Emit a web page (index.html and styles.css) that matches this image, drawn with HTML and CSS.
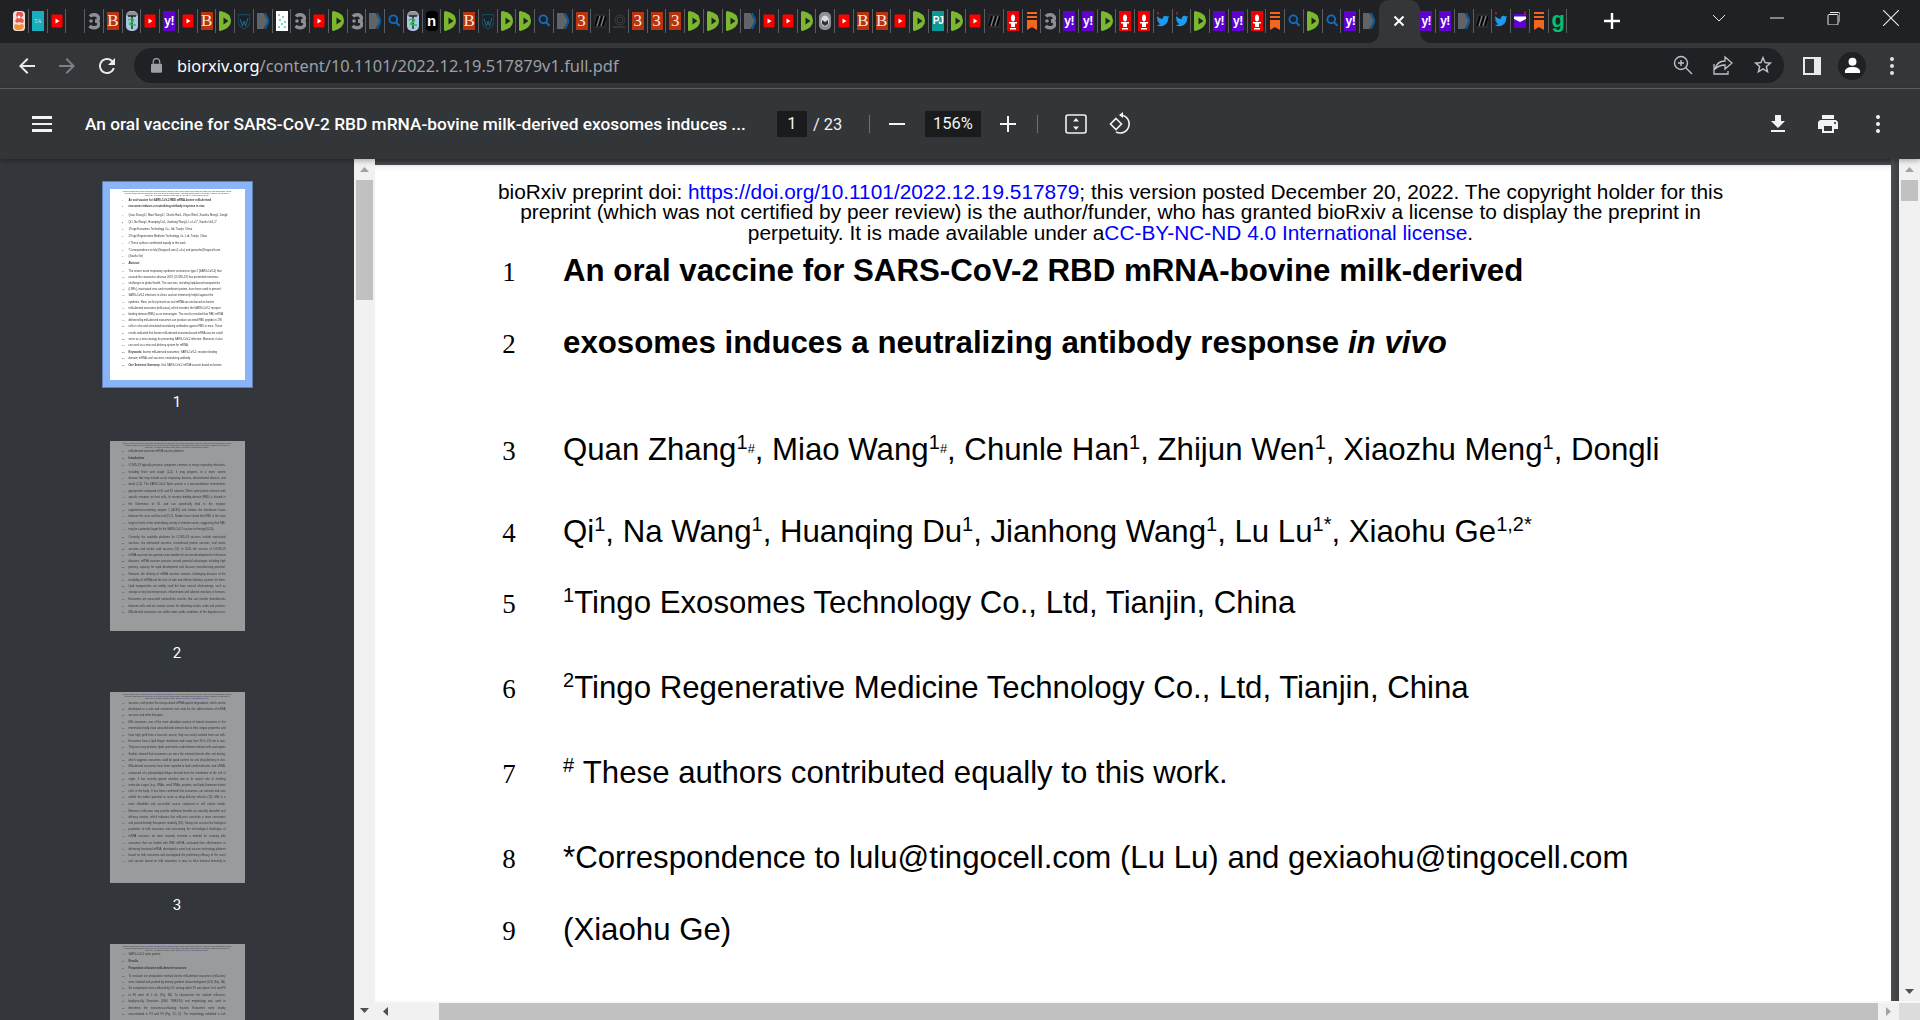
FILE: index.html
```html
<!DOCTYPE html>
<html lang="en">
<head>
<meta charset="utf-8">
<title>An oral vaccine for SARS-CoV-2 RBD mRNA-bovine milk-derived exosomes</title>
<link rel="stylesheet" href="styles.css">
</head>
<body>
<svg class="defs" width="0" height="0" aria-hidden="true">
  <symbol id="fire" viewBox="0 0 12 20"><rect width="12" height="20" rx="3.500" fill="#f6dcd8"/><path d="M4 1h5l1.500 3-2.500 3 3 2-1 3-4-1-2 1-2-2 2-3-1-3z" fill="#e8584a"/><path d="M2 13l4 1 4-1 1 3-3 3H3l-2-3z" fill="#f2922c"/><circle cx="6" cy="6" r="1.600" fill="#fff"/></symbol>
  <symbol id="yt" viewBox="0 0 12 20"><rect x=".5" y="3.5" width="11" height="13" rx="1" fill="#f00"/><path d="M4.500 7.500l4 2.500-4 2.500z" fill="#fff"/></symbol>
  <symbol id="g3" viewBox="0 0 12 20"><path d="M2 5.500C4 3 9 3 10.500 6.500 11 9 9 10 7 10c3 0 4.500 2 3.500 4.500C9 17.500 4 17.500 1.500 15" fill="none" stroke="#8b8e92" stroke-width="3.400"/><circle cx="3" cy="10" r="1.800" fill="#8b8e92"/></symbol>
  <symbol id="staff" viewBox="0 0 12 20"><rect width="12" height="20" rx="5" fill="#a9c7e4"/><path d="M0 5a6 4.500 0 0112 0z" fill="#8d9195"/><path d="M2 5h8M6 5v13" stroke="#222" stroke-width="1.400"/><path d="M2 9c4-2 8 0 4 2s-4 3 4 3" fill="none" stroke="#2fc24a" stroke-width="1.400"/></symbol>
  <symbol id="d" viewBox="0 0 12 20"><path d="M0 1.500Q0 0 1.500 0 12 2 12 10 12 17 1.500 20 0 20 0 18.500z" fill="#7cb82f"/><path d="M4.500 6.500L9.500 10l-5 3.500z" fill="#202124"/></symbol>
  <symbol id="w" viewBox="0 0 12 20"><path d="M0 4q6-1 12 0v7q-1 5-6 7-5-2-6-7z" fill="#15232c" stroke="#1d5a75" stroke-width=".8"/><path d="M2 8l2.500 7L6 10l1.500 5L10 7" fill="none" stroke="#2a6f8f" stroke-width=".9"/></symbol>
  <symbol id="chev" viewBox="0 0 12 20"><path d="M0 2h6.500L11 10l-4.500 8H0z" fill="#606367"/><path d="M8 2l4 8-4 8" fill="none" stroke="#0a5aa0" stroke-width="1.800"/></symbol>
  <symbol id="px" viewBox="0 0 12 20"><rect width="12" height="20" fill="#fff"/><path d="M2 3h2v2H2zM6 5h2v2H6zM3 8h2v2H3zM8 10h2v2H8zM5 12h2v2H5zM2 15h2v2H2zM8 15h2v2H8z" fill="#7fd0c6"/></symbol>
  <symbol id="search" viewBox="0 0 12 20"><circle cx="5.300" cy="8.300" r="3.900" fill="none" stroke="#0f6fc6" stroke-width="1.800"/><path d="M8 11.300l3.500 3.500" stroke="#0f6fc6" stroke-width="2"/></symbol>
  <symbol id="oa" viewBox="0 0 12 20"><rect y="3" width="12" height="14" fill="#2b2c2f"/><path d="M1 15l3-10M5 15l3-10M9 15l3-10" stroke="#000" stroke-width="1.600"/><path d="M3 15l3-10M7 15l3-10" stroke="#a8a8a8" stroke-width=".8"/></symbol>
  <symbol id="spiral" viewBox="0 0 12 20"><g fill="none" stroke="#3c3d40"><circle cx="7" cy="9" r="5"/><circle cx="7" cy="9" r="3"/><path d="M0 16h12" stroke-width="1.500"/></g></symbol>
  <symbol id="owl" viewBox="0 0 12 20"><rect y="1" width="12" height="18" rx="5" fill="#8d9195"/><ellipse cx="6" cy="10" rx="4" ry="5.500" fill="#d8dadc"/><path d="M3 9l3 2 3-2v4l-3 2-3-2z" fill="#333"/></symbol>
  <symbol id="torch" viewBox="0 0 12 20"><rect width="12" height="20" fill="#ee0000"/><ellipse cx="6" cy="7" rx="2" ry="3.500" fill="#fff"/><path d="M2 11h8v1.500H8V16H4v-3.500H2zM3 17h6v1.500H3z" fill="#fff"/></symbol>
  <symbol id="bookmark" viewBox="0 0 12 20"><path d="M1 1h10v2H1zM1 5h10v2H1zM1 9h10v10l-5-3-5 3z" fill="#f4661e"/></symbol>
  <symbol id="tw" viewBox="0 0 12 20"><g transform="translate(-.500 3.500) scale(.54)"><path d="M23.953 4.570a10 10 0 01-2.825.775 4.958 4.958 0 002.163-2.723c-.951.555-2.005.959-3.127 1.184a4.920 4.920 0 00-8.384 4.482C7.690 8.095 4.067 6.130 1.640 3.162a4.822 4.822 0 00-.666 2.475c0 1.710.870 3.213 2.188 4.096a4.904 4.904 0 01-2.228-.616v.060a4.923 4.923 0 003.946 4.827 4.996 4.996 0 01-2.212.085 4.936 4.936 0 004.604 3.417 9.867 9.867 0 01-6.102 2.105c-.390 0-.779-.023-1.170-.067a13.995 13.995 0 007.557 2.209c9.053 0 13.998-7.496 13.998-13.985 0-.210 0-.420-.015-.630A9.935 9.935 0 0024 4.590z" fill="#1d9bf0"/></g><rect x=".5" y="1" width="1" height="2.500" fill="#e0245e"/></symbol>
  <symbol id="mail" viewBox="0 0 12 20"><rect y="3" width="12" height="14" fill="#6001d2"/><path d="M0 5.500h12v2.500l-6 3-6-3z" fill="#fff"/><rect x="10.500" y="0" width="1" height="4" fill="#e0245e"/></symbol>
</svg>

<header class="tabstrip">
  <div class="tabs">
    <div class="tab"><svg class="fav"><use href="#fire"/></svg></div>
    <div class="tab"><div class="fav-t t-ta">TA</div></div>
    <div class="tab"><svg class="fav"><use href="#yt"/></svg></div>
    <div class="tab"></div>
    <div class="tab"><svg class="fav"><use href="#g3"/></svg></div>
    <div class="tab"><div class="fav-t t-b">B</div></div>
    <div class="tab"><svg class="fav"><use href="#staff"/></svg></div>
    <div class="tab"><svg class="fav"><use href="#yt"/></svg></div>
    <div class="tab"><div class="fav-t t-y">y!</div></div>
    <div class="tab"><svg class="fav"><use href="#yt"/></svg></div>
    <div class="tab"><div class="fav-t t-b">B</div></div>
    <div class="tab"><svg class="fav"><use href="#d"/></svg></div>
    <div class="tab"><svg class="fav"><use href="#w"/></svg></div>
    <div class="tab"><svg class="fav"><use href="#chev"/></svg></div>
    <div class="tab"><svg class="fav"><use href="#px"/></svg></div>
    <div class="tab"><svg class="fav"><use href="#g3"/></svg></div>
    <div class="tab"><svg class="fav"><use href="#yt"/></svg></div>
    <div class="tab"><svg class="fav"><use href="#d"/></svg></div>
    <div class="tab"><svg class="fav"><use href="#g3"/></svg></div>
    <div class="tab"><svg class="fav"><use href="#chev"/></svg></div>
    <div class="tab"><svg class="fav"><use href="#search"/></svg></div>
    <div class="tab"><svg class="fav"><use href="#staff"/></svg></div>
    <div class="tab"><div class="fav-t t-n">n</div></div>
    <div class="tab"><svg class="fav"><use href="#d"/></svg></div>
    <div class="tab"><div class="fav-t t-b">B</div></div>
    <div class="tab"><svg class="fav"><use href="#w"/></svg></div>
    <div class="tab"><svg class="fav"><use href="#d"/></svg></div>
    <div class="tab"><svg class="fav"><use href="#d"/></svg></div>
    <div class="tab"><svg class="fav"><use href="#search"/></svg></div>
    <div class="tab"><svg class="fav"><use href="#chev"/></svg></div>
    <div class="tab"><div class="fav-t t-b">3</div></div>
    <div class="tab"><svg class="fav"><use href="#oa"/></svg></div>
    <div class="tab"><svg class="fav"><use href="#spiral"/></svg></div>
    <div class="tab"><div class="fav-t t-b">3</div></div>
    <div class="tab"><div class="fav-t t-b">3</div></div>
    <div class="tab"><div class="fav-t t-b">3</div></div>
    <div class="tab"><svg class="fav"><use href="#d"/></svg></div>
    <div class="tab"><svg class="fav"><use href="#d"/></svg></div>
    <div class="tab"><svg class="fav"><use href="#d"/></svg></div>
    <div class="tab"><svg class="fav"><use href="#chev"/></svg></div>
    <div class="tab"><svg class="fav"><use href="#yt"/></svg></div>
    <div class="tab"><svg class="fav"><use href="#yt"/></svg></div>
    <div class="tab"><svg class="fav"><use href="#d"/></svg></div>
    <div class="tab"><svg class="fav"><use href="#owl"/></svg></div>
    <div class="tab"><svg class="fav"><use href="#yt"/></svg></div>
    <div class="tab"><div class="fav-t t-b">B</div></div>
    <div class="tab"><div class="fav-t t-b">B</div></div>
    <div class="tab"><svg class="fav"><use href="#yt"/></svg></div>
    <div class="tab"><svg class="fav"><use href="#d"/></svg></div>
    <div class="tab"><div class="fav-t t-pj">PJ</div></div>
    <div class="tab"><svg class="fav"><use href="#d"/></svg></div>
    <div class="tab"><svg class="fav"><use href="#yt"/></svg></div>
    <div class="tab"><svg class="fav"><use href="#oa"/></svg></div>
    <div class="tab"><svg class="fav"><use href="#torch"/></svg></div>
    <div class="tab"><svg class="fav"><use href="#bookmark"/></svg></div>
    <div class="tab"><svg class="fav"><use href="#g3"/></svg></div>
    <div class="tab"><div class="fav-t t-y">y!</div></div>
    <div class="tab"><div class="fav-t t-y">y!</div></div>
    <div class="tab"><svg class="fav"><use href="#d"/></svg></div>
    <div class="tab"><svg class="fav"><use href="#torch"/></svg></div>
    <div class="tab"><svg class="fav"><use href="#torch"/></svg></div>
    <div class="tab"><svg class="fav"><use href="#tw"/></svg></div>
    <div class="tab"><svg class="fav"><use href="#tw"/></svg></div>
    <div class="tab"><svg class="fav"><use href="#d"/></svg></div>
    <div class="tab"><div class="fav-t t-y">y!</div></div>
    <div class="tab"><div class="fav-t t-y">y!</div></div>
    <div class="tab"><svg class="fav"><use href="#torch"/></svg></div>
    <div class="tab"><svg class="fav"><use href="#bookmark"/></svg></div>
    <div class="tab"><svg class="fav"><use href="#search"/></svg></div>
    <div class="tab"><svg class="fav"><use href="#d"/></svg></div>
    <div class="tab"><svg class="fav"><use href="#search"/></svg></div>
    <div class="tab"><div class="fav-t t-y">y!</div></div>
    <div class="tab tab-last"><svg class="fav"><use href="#chev"/></svg></div>
    <div class="tab-active"><svg class="icon-close-tab" viewBox="0 0 12 12"><path d="M1.500 1.500l9 9M10.500 1.500l-9 9"/></svg></div>
    <div class="tab"><div class="fav-t t-y">y!</div></div>
    <div class="tab"><div class="fav-t t-y">y!</div></div>
    <div class="tab"><svg class="fav"><use href="#chev"/></svg></div>
    <div class="tab"><svg class="fav"><use href="#oa"/></svg></div>
    <div class="tab"><svg class="fav"><use href="#tw"/></svg></div>
    <div class="tab"><svg class="fav"><use href="#mail"/></svg></div>
    <div class="tab"><svg class="fav"><use href="#bookmark"/></svg></div>
    <div class="tab"><div class="fav-t t-g">g</div></div>
  </div>
  <svg class="new-tab" viewBox="0 0 16 16"><path d="M8 0v16M0 8h16"/></svg>
  <div class="spacer"></div>
  <div class="win-controls">
    <div class="win-btn"><svg class="win-icon" viewBox="0 0 14 14"><path d="M1 4l6 6 6-6"/></svg></div>
    <div class="win-btn win-min"><svg class="win-icon" viewBox="0 0 14 14"><path d="M0 7h14"/></svg></div>
    <div class="win-btn"><svg class="win-icon" viewBox="0 0 14 14"><path d="M3 3.500h8a1 1 0 011 1V13a1 1 0 01-1 1H3a1 1 0 01-1-1V4.500a1 1 0 011-1zM4 1.500h8.500a1.500 1.500 0 011.500 1.500v8"/></svg></div>
    <div class="win-btn"><svg class="win-icon win-x" viewBox="0 0 14 14"><path d="M0 0l14 14M14 0L0 14"/></svg></div>
  </div>
</header>

<nav class="toolbar">
  <div class="nav-btn"><svg class="icon-24 on-light" viewBox="0 0 24 24"><path d="M20 11H7.800l5.600-5.600L12 4l-8 8 8 8 1.400-1.400L7.800 13H20z"/></svg></div>
  <div class="nav-btn"><svg class="icon-24 on-dim" viewBox="0 0 24 24"><path d="M4 11h12.200l-5.600-5.600L12 4l8 8-8 8-1.400-1.400 5.600-5.600H4z"/></svg></div>
  <div class="nav-btn"><svg class="icon-24 on-light" viewBox="0 0 24 24"><path d="M17.650 6.350A7.958 7.958 0 0012 4c-4.420 0-7.990 3.580-7.990 8s3.570 8 7.990 8c3.730 0 6.840-2.550 7.730-6h-2.080A5.990 5.990 0 0112 18c-3.310 0-6-2.690-6-6s2.690-6 6-6c1.660 0 3.140.690 4.220 1.780L13 11h7V4l-2.350 2.350z"/></svg></div>
  <div class="omnibox">
    <svg class="lock" viewBox="0 0 12 16"><path d="M2.500 6V4a3.500 3.500 0 017 0v2" fill="none" stroke="#9aa0a6" stroke-width="1.400"/><rect y="6" width="12" height="10" rx="1.500" fill="#9aa0a6"/></svg>
    <div class="url"><span class="domain">biorxiv.org</span>/content/10.1101/2022.12.19.517879v1.full.pdf</div>
    <div class="omni-icons">
      <svg class="omni-icon omni-zoom" viewBox="0 0 20 20"><g fill="none" stroke="#bdc1c6" stroke-width="1.400"><circle cx="8" cy="8" r="6.500"/><path d="M12.800 12.800L19 19M5 8h6M8 5v6"/></g></svg>
      <svg class="omni-icon omni-share" viewBox="0 0 20 20"><g fill="none" stroke="#bdc1c6" stroke-width="1.300"><path d="M1 9v10h14v-3M2 14q2-8 10-8V2l7 6-7 6v-4q-6 0-10 4z"/></g></svg>
      <svg class="omni-icon-star" viewBox="0 0 24 24"><path fill="#bdc1c6" d="M22 9.240l-7.190-.620L12 2 9.190 8.630 2 9.240l5.460 4.730L5.820 21 12 17.270 18.180 21l-1.630-7.030L22 9.240zM12 15.400l-3.760 2.270 1-4.280-3.320-2.880 4.380-.380L12 6.100l1.710 4.040 4.380.380-3.320 2.880 1 4.280L12 15.400z"/></svg>
    </div>
  </div>
  <div class="nav-btn nav-panel"><svg class="panel-icon" viewBox="0 0 18 18"><path fill="#e8eaed" d="M0 0h18v18H0z"/><path fill="#35363a" d="M2 2h9v14H2z"/></svg></div>
  <div class="nav-btn"><div class="avatar"><svg class="avatar-icon" viewBox="0 0 18 18"><circle cx="9" cy="5" r="4.200" fill="#fff"/><path d="M1 17v-2c0-3 4-4.500 8-4.500s8 1.500 8 4.500v2z" fill="#fff"/></svg></div></div>
  <div class="nav-btn"><svg class="dots" viewBox="0 0 4 20"><circle cx="2" cy="3" r="2"/><circle cx="2" cy="10" r="2"/><circle cx="2" cy="17" r="2"/></svg></div>
</nav>

<div class="pdf-toolbar">
  <div class="menu-icon"><span></span><span></span><span></span></div>
  <div class="doc-title">An oral vaccine for SARS-CoV-2 RBD mRNA-bovine milk-derived exosomes induces ...</div>
  <div class="page-input">1</div>
  <div class="page-count">/ 23</div>
  <div class="tb-sep sep-a"></div>
  <svg class="zoom-sign sign-minus" viewBox="0 0 16 16"><path d="M0 8h16"/></svg>
  <div class="zoom-input">156%</div>
  <svg class="zoom-sign sign-plus" viewBox="0 0 16 16"><path d="M0 8h16M8 0v16"/></svg>
  <div class="tb-sep sep-b"></div>
  <svg class="fit-icon" viewBox="0 0 22 20"><rect x="1" y="1" width="20" height="18" rx="2" fill="none" stroke="#f1f3f4" stroke-width="1.600"/><path d="M11 4l3 3.500H8zM11 16l-3-3.500h6z" fill="#f1f3f4"/></svg>
  <svg class="rotate-icon" viewBox="0 0 24 24"><g fill="none" stroke="#f1f3f4" stroke-width="1.600"><path d="M8 6.500l5.500 5.500L8 17.500 2.500 12z"/><path d="M12 3a9 9 0 11-4 17"/></g><path d="M15 0v6l-4-3z" fill="#f1f3f4"/></svg>
  <div class="spacer"></div>
  <svg class="icon-24 tb-right on-bright" viewBox="0 0 24 24"><path d="M19 9h-4V3H9v6H5l7 7 7-7zM5 18v2h14v-2H5z"/></svg>
  <svg class="icon-24 tb-right on-bright" viewBox="0 0 24 24"><path d="M19 8H5c-1.660 0-3 1.340-3 3v6h4v4h12v-4h4v-6c0-1.660-1.340-3-3-3zm-3 11H8v-5h8v5zm3-7c-.550 0-1-.450-1-1s.450-1 1-1 1 .450 1 1-.450 1-1 1zm-1-9H6v4h12V3z"/></svg>
  <svg class="icon-24 tb-right on-bright" viewBox="0 0 24 24"><circle cx="12" cy="5" r="2"/><circle cx="12" cy="12" r="2"/><circle cx="12" cy="19" r="2"/></svg>
</div>

<main class="workspace">
  <aside class="sidebar">
    <div class="thumbs">
      <div class="thumb-item">
        <div class="thumb-frame selected">
          <div class="thumb">
            <div class="t-head">bioRxiv preprint doi: <span class="t-link">https://doi.org/10.1101/2022.12.19.517879</span>; this version posted December 20, 2022. The copyright holder for this<br>preprint (which was not certified by peer review) is the author/funder, who has granted bioRxiv a license to display the preprint in<br>perpetuity. It is made available under a<span class="t-link">CC-BY-NC-ND 4.0 International license.</span></div>
            <div class="tl tl-strong"><span class="tn">1</span><span class="tx">An oral vaccine for SARS-CoV-2 RBD mRNA-bovine milk-derived</span></div>
            <div class="tl tl-strong"><span class="tn">2</span><span class="tx">exosomes induces a neutralizing antibody response in vivo</span></div>
            <div class="tl tl-big"><span class="tn">3</span><span class="tx">Quan Zhang1#, Miao Wang1#, Chunle Han1, Zhijun Wen1, Xiaozhu Meng1, Dongli</span></div>
            <div class="tl tl-mid"><span class="tn">4</span><span class="tx">Qi1, Na Wang1, Huanqing Du1, Jianhong Wang1, Lu Lu1*, Xiaohu Ge1,2*</span></div>
            <div class="tl"><span class="tn">5</span><span class="tx">1Tingo Exosomes Technology Co., Ltd, Tianjin, China</span></div>
            <div class="tl tl-mid"><span class="tn">6</span><span class="tx">2Tingo Regenerative Medicine Technology Co., Ltd, Tianjin, China</span></div>
            <div class="tl tl-mid"><span class="tn">7</span><span class="tx"># These authors contributed equally to this work.</span></div>
            <div class="tl tl-mid"><span class="tn">8</span><span class="tx">*Correspondence to lulu@tingocell.com (Lu Lu) and gexiaohu@tingocell.com</span></div>
            <div class="tl"><span class="tn">9</span><span class="tx">(Xiaohu Ge)</span></div>
            <div class="tl tl-mid tl-strong"><span class="tn">10</span><span class="tx">Abstract</span></div>
            <div class="tl tl-mid"><span class="tn">11</span><span class="tx">The severe acute respiratory syndrome coronavirus type 2 (SARS-CoV-2) that</span></div>
            <div class="tl"><span class="tn">12</span><span class="tx">caused the coronavirus disease 2019 (COVID-19) has presented numerous</span></div>
            <div class="tl"><span class="tn">13</span><span class="tx">challenges to global health. The vaccines, including lipid-based nanoparticles</span></div>
            <div class="tl"><span class="tn">14</span><span class="tx">(LNPs), inactivated virus and recombinant protein, have been used to prevent</span></div>
            <div class="tl"><span class="tn">15</span><span class="tx">SARS-CoV-2 infections in clinics and are immensely helpful against the</span></div>
            <div class="tl"><span class="tn">16</span><span class="tx">epidemic. Here, we first present an oral mRNA vaccine based on bovine</span></div>
            <div class="tl"><span class="tn">17</span><span class="tx">milk-derived exosomes (milk-exos), which encodes the SARS-CoV-2 receptor</span></div>
            <div class="tl"><span class="tn">18</span><span class="tx">binding domain (RBD) as an immunogen. The results revealed that RBD mRNA</span></div>
            <div class="tl"><span class="tn">19</span><span class="tx">delivered by milk-derived exosomes can produce secreted RBD peptide in 293</span></div>
            <div class="tl"><span class="tn">20</span><span class="tx">cells in vitro and stimulated neutralizing antibodies against RBD in mice. These</span></div>
            <div class="tl"><span class="tn">21</span><span class="tx">results indicated that bovine milk-derived exosome-based mRNA vaccine could</span></div>
            <div class="tl"><span class="tn">22</span><span class="tx">serve as a new strategy for preventing SARS-CoV-2 infection. Moreover, it also</span></div>
            <div class="tl"><span class="tn">23</span><span class="tx">can work as a new oral delivery system for mRNA.</span></div>
            <div class="tl tl-mid"><span class="tn">24</span><span class="tx"><b>Keywords:</b> bovine milk-derived exosomes; SARS-CoV-2; receptor binding</span></div>
            <div class="tl"><span class="tn">25</span><span class="tx">domain; mRNA; oral vaccines; neutralizing antibody</span></div>
            <div class="tl tl-mid"><span class="tn">26</span><span class="tx"><b>One Sentence Summary:</b> Oral SARS-CoV-2 mRNA vaccine based on bovine</span></div>
          </div>
        </div>
        <div class="thumb-label">1</div>
      </div>

      <div class="thumb-item">
        <div class="thumb-frame">
          <div class="thumb dim">
            <div class="t-head">bioRxiv preprint doi: <span class="t-link">https://doi.org/10.1101/2022.12.19.517879</span>; this version posted December 20, 2022. The copyright holder for this<br>preprint (which was not certified by peer review) is the author/funder, who has granted bioRxiv a license to display the preprint in<br>perpetuity. It is made available under a<span class="t-link">CC-BY-NC-ND 4.0 International license.</span></div>
            <div class="tl"><span class="tn">27</span><span class="tx">milk-derived exosome mRNA vaccine platform.</span></div>
            <div class="tl tl-mid tl-strong"><span class="tn">28</span><span class="tx">Introduction</span></div>
            <div class="tl tl-mid tj"><span class="tn">29</span><span class="tx">COVID-19 typically presents symptoms common to many respiratory infections,</span></div>
            <div class="tl tj"><span class="tn">30</span><span class="tx">including fever and cough (1-4). It may progress to a more severe</span></div>
            <div class="tl tj"><span class="tn">31</span><span class="tx">disease that may include acute respiratory distress, disseminated disease, and</span></div>
            <div class="tl tj"><span class="tn">32</span><span class="tx">death (1-3). The SARS-CoV-2 Spike protein is a transmembrane homotrimeric</span></div>
            <div class="tl tl-mid tj"><span class="tn">33</span><span class="tx">glycoprotein composed of S1 and S2 subunits. When spike protein interacts with</span></div>
            <div class="tl tj"><span class="tn">34</span><span class="tx">specific receptors on host cells, its receptor binding domain (RBD) is located in</span></div>
            <div class="tl tj"><span class="tn">35</span><span class="tx">the N-terminus of S1 and can specifically bind to the receptor</span></div>
            <div class="tl tj"><span class="tn">36</span><span class="tx">angiotensin-converting enzyme 2 (ACE2) and initiates the membrane fusion</span></div>
            <div class="tl tj"><span class="tn">37</span><span class="tx">between the virus and host cell (5-7). Studies have shown that RBD is the main</span></div>
            <div class="tl tl-mid tj"><span class="tn">38</span><span class="tx">target of most of the neutralizing activity in immune serum, suggesting that RBD</span></div>
            <div class="tl"><span class="tn">39</span><span class="tx">may be a potential target for the SARS-CoV-2 vaccine or therapy (8-10).</span></div>
            <div class="tl tl-mid tj"><span class="tn">40</span><span class="tx">Currently, the available platforms for COVID-19 vaccines include inactivated</span></div>
            <div class="tl tj"><span class="tn">41</span><span class="tx">vaccines, live attenuated vaccines, recombinant protein vaccines, viral vector</span></div>
            <div class="tl tj"><span class="tn">42</span><span class="tx">vaccines and nucleic acid vaccines (11). In 2020, the success of COVID-19</span></div>
            <div class="tl tj"><span class="tn">43</span><span class="tx">mRNA vaccines has opened a new window for vaccine development for infectious</span></div>
            <div class="tl tj"><span class="tn">44</span><span class="tx">diseases. mRNA vaccines possess several potential advantages including high</span></div>
            <div class="tl tj"><span class="tn">45</span><span class="tx">potency, capacity for rapid development and low-cost manufacturing potential.</span></div>
            <div class="tl tj"><span class="tn">46</span><span class="tx">However, the delivery of mRNA vaccines remains challenging because of the</span></div>
            <div class="tl tj"><span class="tn">47</span><span class="tx">instability of mRNA and the lack of safe and efficient delivery systems for them.</span></div>
            <div class="tl tj"><span class="tn">48</span><span class="tx">Lipid nanoparticles are widely used but have several shortcomings, such as</span></div>
            <div class="tl tj"><span class="tn">49</span><span class="tx">storage at very low temperature, inflammation and adverse reactions in humans.</span></div>
            <div class="tl tl-mid tj"><span class="tn">50</span><span class="tx">Exosomes are nanosized extracellular vesicles that can transfer biomolecules</span></div>
            <div class="tl tj"><span class="tn">51</span><span class="tx">between cells and are natural carriers for delivering nucleic acids and proteins.</span></div>
            <div class="tl tj"><span class="tn">52</span><span class="tx">Milk-derived exosomes are stable under acidic conditions of the digestive tract.</span></div>
          </div>
        </div>
        <div class="thumb-label">2</div>
      </div>

      <div class="thumb-item">
        <div class="thumb-frame">
          <div class="thumb dim">
            <div class="t-head">bioRxiv preprint doi: <span class="t-link">https://doi.org/10.1101/2022.12.19.517879</span>; this version posted December 20, 2022. The copyright holder for this<br>preprint (which was not certified by peer review) is the author/funder, who has granted bioRxiv a license to display the preprint in<br>perpetuity. It is made available under a<span class="t-link">CC-BY-NC-ND 4.0 International license.</span></div>
            <div class="tl tj"><span class="tn">53</span><span class="tx">vaccines, and protect the encapsulated mRNA against degradation, which can be</span></div>
            <div class="tl tj"><span class="tn">54</span><span class="tx">developed as a safe and convenient oral route for the administration of mRNA</span></div>
            <div class="tl"><span class="tn">55</span><span class="tx">vaccines and other therapies.</span></div>
            <div class="tl tl-mid tj"><span class="tn">56</span><span class="tx">Milk exosomes, one of the most abundant sources of natural exosomes in the</span></div>
            <div class="tl tj"><span class="tn">57</span><span class="tx">mammalian body, have attracted wide interest due to their unique properties and</span></div>
            <div class="tl tj"><span class="tn">58</span><span class="tx">have high yield from a low-cost source; they are easily isolated from raw milk.</span></div>
            <div class="tl tj"><span class="tn">59</span><span class="tx">Exosomes have a lipid bilayer membrane and range from 30 to 150 nm in size.</span></div>
            <div class="tl tj"><span class="tn">60</span><span class="tx">They can carry proteins, lipids and nucleic acids between distant cells and organs</span></div>
            <div class="tl tl-mid tj"><span class="tn">61</span><span class="tx">Studies showed that exosomes can cross the intestinal barrier after oral dosing,</span></div>
            <div class="tl tj"><span class="tn">62</span><span class="tx">which suggests exosomes could be good carriers for oral drug delivery in vivo.</span></div>
            <div class="tl tj"><span class="tn">63</span><span class="tx">Milk-derived exosomes have been reported to load small molecules and siRNA.</span></div>
            <div class="tl tj"><span class="tn">64</span><span class="tx">composed of a phospholipid bilayer derived from the membrane of the cell of</span></div>
            <div class="tl tj"><span class="tn">65</span><span class="tx">origin. It has recently gained attention due to its natural role of shuttling</span></div>
            <div class="tl tj"><span class="tn">66</span><span class="tx">molecular cargos (e.g., RNAs, small RNAs, proteins, and lipids) between distant</span></div>
            <div class="tl tj"><span class="tn">67</span><span class="tx">cells in the body. It has been confirmed that exosomes can transmit and also</span></div>
            <div class="tl tj"><span class="tn">68</span><span class="tx">exhibit the widest potential to serve as drug delivery vehicles (16). Milk is a</span></div>
            <div class="tl tj"><span class="tn">69</span><span class="tx">more affordable and accessible source compared to cell culture media.</span></div>
            <div class="tl tl-mid tj"><span class="tn">70</span><span class="tx">Moreover, milk-exos may provide additional benefits as naturally desirable oral</span></div>
            <div class="tl tj"><span class="tn">71</span><span class="tx">delivery carriers, which indicates that milk-exos constitute a more convenient</span></div>
            <div class="tl tj"><span class="tn">72</span><span class="tx">and patient-friendly therapeutic modality (26). Taking into account the biological</span></div>
            <div class="tl tj"><span class="tn">73</span><span class="tx">properties of milk exosomes and overcoming the technological challenges of</span></div>
            <div class="tl tj"><span class="tn">74</span><span class="tx">mRNA vaccines, we have instantly invented a method for creating milk</span></div>
            <div class="tl tl-mid tj"><span class="tn">75</span><span class="tx">exosomes that are loaded with RBD mRNA, evaluated their effectiveness in</span></div>
            <div class="tl tj"><span class="tn">76</span><span class="tx">delivering functional mRNA, developed a novel oral vaccine technology platform</span></div>
            <div class="tl tj"><span class="tn">77</span><span class="tx">based on milk exosomes and investigated the preliminary efficacy of the novel</span></div>
            <div class="tl tj"><span class="tn">78</span><span class="tx">oral vaccine based on milk exosomes in mice to elicit humoral immunity to</span></div>
          </div>
        </div>
        <div class="thumb-label">3</div>
      </div>

      <div class="thumb-item">
        <div class="thumb-frame">
          <div class="thumb dim">
            <div class="t-head">bioRxiv preprint doi: <span class="t-link">https://doi.org/10.1101/2022.12.19.517879</span>; this version posted December 20, 2022. The copyright holder for this<br>preprint (which was not certified by peer review) is the author/funder, who has granted bioRxiv a license to display the preprint in<br>perpetuity. It is made available under a<span class="t-link">CC-BY-NC-ND 4.0 International license.</span></div>
            <div class="tl"><span class="tn">79</span><span class="tx">SARS-CoV-2 spike protein.</span></div>
            <div class="tl tl-mid tl-strong"><span class="tn">80</span><span class="tx">Results</span></div>
            <div class="tl tl-mid tl-strong"><span class="tn">81</span><span class="tx">Preparation of bovine milk-derived exosomes</span></div>
            <div class="tl tl-mid tj"><span class="tn">82</span><span class="tx">To evaluate our preparation method, bovine milk-derived exosomes (milk-exos)</span></div>
            <div class="tl tj"><span class="tn">83</span><span class="tx">were isolated and purified by density gradient ultracentrifugation (DG) (Fig. 1A).</span></div>
            <div class="tl tj"><span class="tn">84</span><span class="tx">Six components were collected by DG, among which F1 was about 5 mL and F6</span></div>
            <div class="tl tl-mid tj"><span class="tn">85</span><span class="tx">to F6 were all 2 mL (Fig. 1B). To characterize the isolated milk-exos,</span></div>
            <div class="tl tj"><span class="tn">86</span><span class="tx">biophysically, Nanosizer (DSN, TEM-F10) and morphology was used to</span></div>
            <div class="tl tj"><span class="tn">87</span><span class="tx">determine the exosomes-containing fraction. Exosomes were mainly</span></div>
            <div class="tl tj"><span class="tn">88</span><span class="tx">concentrated in F3 and F4 (Fig. 1C, D). The morphology exhibited a rich</span></div>
          </div>
        </div>
        <div class="thumb-label">4</div>
      </div>
    </div>
    <div class="sb-v sb-left">
      <svg class="arrow" viewBox="0 0 9 5"><path d="M4.500 0L9 5H0z" fill="#a3a3a3"/></svg>
      <div class="sb-thumb left-thumb"></div>
      <div class="spacer"></div>
      <svg class="arrow" viewBox="0 0 9 5"><path d="M0 0h9L4.500 5z" fill="#505050"/></svg>
    </div>
  </aside>

  <section class="viewer">
    <div class="viewer-main">
      <div class="page-col">
        <div class="top-gutter"></div>
        <article class="page">
          <div class="pre-note">
            <div>bioRxiv preprint doi: <a class="blue">https://doi.org/10.1101/2022.12.19.517879</a>; this version posted December 20, 2022. The copyright holder for this</div>
            <div>preprint (which was not certified by peer review) is the author/funder, who has granted bioRxiv a license to display the preprint in</div>
            <div>perpetuity. It is made available under a<a class="blue">CC-BY-NC-ND 4.0 International license</a>.</div>
          </div>
          <div class="row row-title1"><span class="num">1</span><h1 class="title">An oral vaccine for SARS-CoV-2 RBD mRNA-bovine milk-derived</h1></div>
          <div class="row row-title2"><span class="num">2</span><h1 class="title">exosomes induces a neutralizing antibody response <i>in vivo</i></h1></div>
          <div class="row row-a3"><span class="num">3</span><p class="line">Quan Zhang<sup>1</sup><sup class="hash">#</sup>, Miao Wang<sup>1</sup><sup class="hash">#</sup>, Chunle Han<sup>1</sup>, Zhijun Wen<sup>1</sup>, Xiaozhu Meng<sup>1</sup>, Dongli</p></div>
          <div class="row row-a4"><span class="num">4</span><p class="line">Qi<sup>1</sup>, Na Wang<sup>1</sup>, Huanqing Du<sup>1</sup>, Jianhong Wang<sup>1</sup>, Lu Lu<sup>1*</sup>, Xiaohu Ge<sup>1,2*</sup></p></div>
          <div class="row row-a5"><span class="num">5</span><p class="line"><sup>1</sup>Tingo Exosomes Technology Co., Ltd, Tianjin, China</p></div>
          <div class="row row-a6"><span class="num">6</span><p class="line"><sup>2</sup>Tingo Regenerative Medicine Technology Co., Ltd, Tianjin, China</p></div>
          <div class="row row-a7"><span class="num">7</span><p class="line"><sup class="sup-gap">#</sup> These authors contributed equally to this work.</p></div>
          <div class="row row-a8"><span class="num">8</span><p class="line">*Correspondence to lulu@tingocell.com (Lu Lu) and gexiaohu@tingocell.com</p></div>
          <div class="row row-a9"><span class="num">9</span><p class="line">(Xiaohu Ge)</p></div>
        </article>
      </div>
      <div class="side-gutter"></div>
      <div class="sb-v sb-right">
        <svg class="arrow" viewBox="0 0 9 5"><path d="M4.500 0L9 5H0z" fill="#a3a3a3"/></svg>
        <div class="sb-thumb right-thumb"></div>
        <div class="spacer"></div>
        <svg class="arrow" viewBox="0 0 9 5"><path d="M0 0h9L4.500 5z" fill="#505050"/></svg>
      </div>
    </div>
    <div class="sb-h">
      <svg class="arrow-h" viewBox="0 0 5 9"><path d="M5 0v9L0 4.500z" fill="#505050"/></svg>
      <div class="h-thumb"></div>
      <svg class="arrow-h" viewBox="0 0 5 9"><path d="M0 0v9l5-4.500z" fill="#a3a3a3"/></svg>
      <div class="corner"></div>
    </div>
  </section>
</main>
</body>
</html>
```

FILE: styles.css
```css
* { box-sizing: border-box; }
html, body { margin: 0; padding: 0; height: 100%; }
body {
  width: 1920px;
  height: 1020px;
  overflow: hidden;
  background: #323639;
  font-family: "Liberation Sans", Arial, sans-serif;
  display: flex;
  flex-direction: column;
}
.defs { position: absolute; }
.spacer { flex: 1 1 auto; }

/* tab strip */
.tabstrip {
  height: 43px;
  flex: none;
  background: #202124;
  display: flex;
  align-items: center;
}
.tabs {
  display: flex;
  align-items: center;
  height: 100%;
  padding-left: 10.2px;
  flex: none;
}
.tab {
  width: 18.76px;
  height: 24px;
  margin-top: -1px;
  flex: none;
  display: flex;
  align-items: center;
  justify-content: center;
  border-right: 1px solid #5a5d61;
}
.tab-last { border-right-color: transparent; }
.fav { width: 12px; height: 20px; display: block; }
.fav-t {
  width: 12px;
  height: 20px;
  flex: none;
  text-align: center;
  white-space: nowrap;
  line-height: 20px;
  font-weight: 700;
}
.t-ta { background: #17adba; color: #bfe8ec; font-family: "Liberation Serif", serif; font-size: 6px; font-weight: 400; }
.t-b { height: 18px; line-height: 18px; background: #b9330f; color: #f6e7dd; font-family: "Liberation Serif", serif; font-size: 17px; font-weight: 400; }
.t-y { background: #6001d2; color: #fff; font-size: 12px; letter-spacing: -.6px; font-style: normal; }
.t-n { background: #000; color: #fff; border-radius: 4px; font-size: 15px; }
.t-pj { background: #099a96; color: #fff; font-size: 10px; letter-spacing: -1px; }
.t-g { height: 18px; line-height: 15px; background: #202124; color: #00c26e; font-size: 22px; }
.tab-active {
  position: relative;
  width: 41px;
  height: 43px;
  margin-right: -2.6px;
  flex: none;
  background: #35363a;
  border-radius: 10px 10px 0 0;
  display: flex;
  align-items: center;
  justify-content: center;
  z-index: 1;
}
.tab-active::before,
.tab-active::after {
  content: "";
  position: absolute;
  bottom: 0;
  width: 10px;
  height: 10px;
}
.tab-active::before {
  left: -10px;
  background: radial-gradient(circle at 0 0, transparent 9.5px, #35363a 10px);
}
.tab-active::after {
  right: -10px;
  background: radial-gradient(circle at 100% 0, transparent 9.5px, #35363a 10px);
}
.icon-close-tab { width: 12px; height: 12px; margin-top: -1px; fill: none; stroke: #fff; stroke-width: 2; }
.new-tab { width: 16px; height: 16px; margin-left: 36.4px; margin-top: -1px; fill: none; stroke: #fff; stroke-width: 2.4; flex: none; }
.win-controls { display: flex; align-self: flex-start; flex: none; }
.win-btn { width: 58px; height: 36px; display: flex; align-items: center; justify-content: center; }
.win-min { margin-right: -2.4px; }
.win-icon { width: 14px; height: 14px; fill: none; stroke: #e8eaed; stroke-width: 1; }
.win-x { width: 16px; height: 16px; }

/* address toolbar */
.toolbar {
  height: 46px;
  flex: none;
  background: #35363a;
  border-bottom: 1px solid #5f6265;
  display: flex;
  align-items: center;
  padding-left: 7px;
}
.nav-btn {
  width: 40px;
  height: 40px;
  flex: none;
  display: flex;
  align-items: center;
  justify-content: center;
}
.icon-24 { width: 24px; height: 24px; flex: none; display: block; }
.on-light { fill: #e8eaed; }
.on-dim { fill: #7c7f84; }
.on-bright { fill: #f1f3f4; }
.omnibox {
  width: 1650px;
  height: 35px;
  margin-left: 7px;
  margin-top: -1px;
  flex: none;
  background: #202124;
  border-radius: 18px;
  display: flex;
  align-items: center;
  padding-left: 17px;
}
.lock { width: 11px; height: 15px; flex: none; }
.url {
  margin-left: 15px;
  font-family: "Noto Sans", sans-serif;
  font-size: 16.4px;
  color: #9aa0a6;
  white-space: nowrap;
}
.domain { color: #fff; }
.omni-icons { margin-left: auto; display: flex; align-items: center; margin-right: 10.5px; }
.omni-icon { width: 20px; height: 20px; flex: none; }
.omni-zoom { margin-right: 20px; }
.omni-share { margin-right: 19px; }
.omni-icon-star { width: 22px; height: 22px; flex: none; }
.nav-panel { margin-left: 8px; }
.panel-icon { width: 18px; height: 18px; }
.avatar {
  width: 28px;
  height: 28px;
  border-radius: 50%;
  background: #202124;
  display: flex;
  align-items: center;
  justify-content: center;
}
.avatar-icon { width: 17px; height: 17px; }
.dots { width: 4px; height: 20px; fill: #e0e2e5; }

/* pdf toolbar */
.pdf-toolbar {
  height: 70px;
  flex: none;
  background: #323639;
  display: flex;
  align-items: center;
  padding-right: 30px;
  position: relative;
  z-index: 2;
  box-shadow: 0 2px 5px rgba(0, 0, 0, .28);
  font-family: Roboto, sans-serif;
  color: #f1f3f4;
}
.menu-icon { width: 20px; height: 16px; margin-left: 32px; flex: none; display: flex; flex-direction: column; justify-content: space-between; }
.menu-icon span { display: block; height: 2.6px; background: #f1f3f4; }
.doc-title { width: 692px; margin-left: 33px; flex: none; font-size: 17.3px; font-weight: 500; white-space: nowrap; overflow: hidden; color: #fff; }
.page-input, .zoom-input {
  height: 26px;
  background: #191b1c;
  flex: none;
  font-size: 16.5px;
  line-height: 25px;
  text-align: center;
}
.page-input { width: 30px; }
.zoom-input { width: 56px; margin-left: 20px; }
.page-count { width: 30px; margin-left: 6px; flex: none; font-size: 16.4px; white-space: nowrap; }
.tb-sep { width: 1px; height: 18px; background: #6d7074; flex: none; }
.sep-a { margin-left: 26px; }
.sep-b { margin-left: 21px; }
.zoom-sign { width: 16px; height: 16px; flex: none; fill: none; stroke: #f1f3f4; stroke-width: 2; }
.sign-minus { margin-left: 19px; }
.sign-plus { margin-left: 19px; }
.fit-icon { width: 22px; height: 20px; margin-left: 27px; flex: none; }
.rotate-icon { width: 24px; height: 24px; margin-left: 21px; flex: none; }
.tb-right { margin-left: 26px; }

/* workspace */
.workspace { flex: 1 1 auto; min-height: 0; display: flex; overflow: hidden; }
.sidebar { width: 375px; flex: none; display: flex; background: #33363a; overflow: hidden; }
.thumbs {
  width: 354px;
  flex: none;
  padding-top: 22px;
  display: flex;
  flex-direction: column;
  align-items: center;
  overflow: hidden;
}
.thumb-item { height: 251.5px; flex: none; display: flex; flex-direction: column; align-items: center; }
.thumb-frame { padding: 7px; flex: none; border: 1px solid transparent; }
.thumb-frame.selected { background: #8ab4f8; border-color: #5e7fb0; }
.thumb { width: 135px; height: 190.5px; background: #fff; overflow: hidden; padding-top: 2.3px; color: #333; }
.thumb.dim { opacity: .5; }
.thumb-label { height: 28px; line-height: 28px; font-family: Roboto, sans-serif; font-size: 15px; color: #fff; }
.t-head { font-size: 1.85px; line-height: 1.9px; text-align: center; white-space: nowrap; height: 6.2px; filter: blur(.2px); }
.t-link { color: #2222dd; }
.tl { display: flex; align-items: center; height: 6.2px; font-size: 2.7px; line-height: 6px; padding-left: 12.5px; white-space: nowrap; filter: blur(.3px); }
.tl-mid { margin-top: 1px; }
.tl-big { margin-top: 3.2px; }
.tl-strong { font-weight: 700; }
.tn { width: 6.5px; flex: none; font-family: "Liberation Serif", serif; font-size: 2.4px; font-weight: 400; }
.tx { width: 97px; flex: none; }
.tj .tx { text-align: justify; text-align-last: justify; white-space: nowrap; }

.sb-v { width: 21px; flex: none; background: #f1f1f1; display: flex; flex-direction: column; align-items: center; padding: 8px 0 7px; }
.arrow { width: 9px; height: 5px; flex: none; }
.sb-thumb { width: 17px; background: #c1c1c1; margin-top: 8px; flex: none; }
.left-thumb { height: 120px; }
.right-thumb { height: 21px; }

.viewer { flex: 1 1 auto; min-width: 0; display: flex; flex-direction: column; }
.viewer-main { flex: 1 1 auto; min-height: 0; display: flex; }
.page-col { flex: 1 1 auto; min-width: 0; display: flex; flex-direction: column; }
.top-gutter { height: 6px; flex: none; background: linear-gradient(#34373a, #4a4d50); }
.page { flex: 1 1 auto; background: #fff; padding-top: 16.5px; padding-left: 121px; overflow: hidden; box-shadow: inset 0 6px 6px -5px rgba(0, 0, 0, .12); color: #000; }
.side-gutter { width: 8px; flex: none; background: linear-gradient(to right, #4b4e51, #3c3f42); }
.sb-h { height: 19px; flex: none; display: flex; align-items: stretch; background: #f1f1f1; border-top: 2px solid #f7f7f7; }
.arrow-h { width: 5px; height: 9px; align-self: center; flex: none; margin-left: 8px; }
.h-thumb { width: 1439px; margin-left: 51px; flex: none; background: #c1c1c1; }
.h-thumb + .arrow-h { margin-left: 8px; }
.corner { width: 21px; margin-left: auto; flex: none; background: #dcdcdc; }

/* pdf page */
.pre-note { width: 1225px; margin-left: 2px; font-size: 20.85px; line-height: 20.7px; text-align: center; white-space: nowrap; }
.blue { color: #0000ff; }
.row { display: flex; align-items: baseline; height: 40px; line-height: 40px; }
.num { width: 26px; margin-right: 41px; flex: none; text-align: center; font-family: "Liberation Serif", serif; font-size: 27px; }
.title { margin: 0; font-size: 31.25px; font-weight: 700; white-space: nowrap; }
.line { margin: 0; font-size: 31.2px; font-weight: 400; white-space: nowrap; }
.line sup { font-size: 20px; line-height: 0; vertical-align: 11px; }
.line sup.hash { font-size: 13px; font-style: italic; vertical-align: 7px; }
.line sup.sup-gap { margin-right: .6px; }
.row-title1 { margin-top: 7.5px; }
.row-title2 { margin-top: 32px; }
.row-a3 { margin-top: 66.5px; }
.row-a4 { margin-top: 42px; }
.row-a5 { margin-top: 31px; }
.row-a6 { margin-top: 45px; }
.row-a7 { margin-top: 45px; }
.row-a8 { margin-top: 45px; }
.row-a9 { margin-top: 32px; }
```
